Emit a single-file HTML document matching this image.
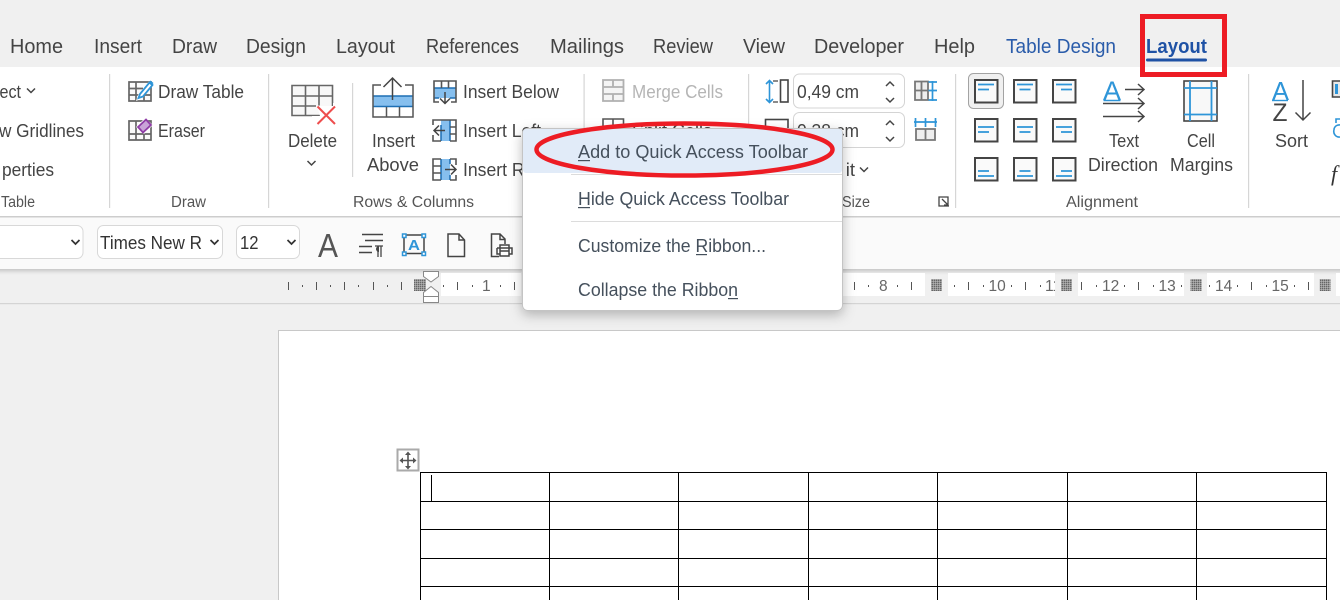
<!DOCTYPE html>
<html><head><meta charset="utf-8"><style>
html,body{margin:0;padding:0;width:1340px;height:600px;overflow:hidden;background:#f0f0f0}
svg{display:block}
text{font-family:"Liberation Sans",sans-serif;fill:#444;white-space:pre}
.tab{font-size:20px}
.r{font-size:18.5px}
.g{font-size:15.5px;fill:#555}
.m{font-size:18.5px;fill:#45505c}
.n{font-size:15.5px;fill:#666}
.i{fill:none;stroke:#555;stroke-width:1.6}
.d{fill:none;stroke:#444;stroke-width:2}
.b{fill:none;stroke:#2e95d8;stroke-width:2}
.l{fill:none;stroke:#444;stroke-width:1.5}
</style></head><body>
<svg width="1340" height="600" viewBox="0 0 1340 600" xmlns="http://www.w3.org/2000/svg">
<defs>
<pattern id="dots" width="2" height="2" patternUnits="userSpaceOnUse"><rect width="2" height="2" fill="#c8c8c8"/><rect width="1.5" height="1.5" fill="#666"/></pattern>
<clipPath id="c11"><rect x="948" y="273" width="107" height="24"/></clipPath>
<filter id="sh" x="-10%" y="-15%" width="120%" height="135%"><feDropShadow dx="0" dy="4" stdDeviation="6" flood-color="#000" flood-opacity=".26"/></filter>
<filter id="sh2" x="-2%" y="-50%" width="104%" height="200%"><feDropShadow dx="0" dy="2" stdDeviation="2" flood-color="#000" flood-opacity=".2"/></filter>
</defs>

<rect width="1340" height="600" fill="#f0f0f0"/>

<!-- ribbon -->
<rect x="-10" y="217" width="1360" height="52" fill="#fafafa" filter="url(#sh2)"/>
<rect x="0" y="67" width="1340" height="149" fill="#fff"/>
<rect x="0" y="216" width="1340" height="1.5" fill="#cdcdcd"/>

<!-- tabs -->
<g class="tabs">
<text class="tab" x="10" y="53" textLength="53" lengthAdjust="spacingAndGlyphs">Home</text>
<text class="tab" x="94" y="53" textLength="48" lengthAdjust="spacingAndGlyphs">Insert</text>
<text class="tab" x="172" y="53" textLength="45" lengthAdjust="spacingAndGlyphs">Draw</text>
<text class="tab" x="246" y="53" textLength="60" lengthAdjust="spacingAndGlyphs">Design</text>
<text class="tab" x="336" y="53" textLength="59" lengthAdjust="spacingAndGlyphs">Layout</text>
<text class="tab" x="426" y="53" textLength="93" lengthAdjust="spacingAndGlyphs">References</text>
<text class="tab" x="550" y="53" textLength="74" lengthAdjust="spacingAndGlyphs">Mailings</text>
<text class="tab" x="653" y="53" textLength="60" lengthAdjust="spacingAndGlyphs">Review</text>
<text class="tab" x="743" y="53" textLength="42" lengthAdjust="spacingAndGlyphs">View</text>
<text class="tab" x="814" y="53" textLength="90" lengthAdjust="spacingAndGlyphs">Developer</text>
<text class="tab" x="934" y="53" textLength="41" lengthAdjust="spacingAndGlyphs">Help</text>
<text class="tab" x="1006" y="53" textLength="110" lengthAdjust="spacingAndGlyphs" style="fill:#2a5caa">Table Design</text>
<text class="tab" x="1146" y="53" textLength="61" lengthAdjust="spacingAndGlyphs" style="fill:#1f52a5;font-weight:bold">Layout</text>
</g>
<rect x="1146" y="58.500" width="61" height="3" rx="1.500" fill="#1f52a5"/>
<rect x="1142.500" y="16.500" width="82" height="58" fill="none" stroke="#ed1c24" stroke-width="5"/>

<!-- separators -->
<g fill="#d6d6d6">
<rect x="109" y="74" width="1.200" height="134"/><rect x="268" y="74" width="1.200" height="134"/>
<rect x="352" y="83" width="1.200" height="94"/><rect x="583.500" y="74" width="1.200" height="134"/>
<rect x="748" y="74" width="1.200" height="134"/><rect x="955" y="74" width="1.200" height="134"/>
<rect x="1248" y="74" width="1.200" height="134"/>
</g>

<!-- left group -->
<text class="r" x="-0.500" y="98" textLength="21.500" lengthAdjust="spacingAndGlyphs">ect</text>
<path class="l" d="M27 88.500l4 4 4-4"/>
<text class="r" x="-1" y="137" textLength="85" lengthAdjust="spacingAndGlyphs">w Gridlines</text>
<text class="r" x="2" y="176" textLength="52" lengthAdjust="spacingAndGlyphs">perties</text>
<text class="g" x="1" y="207" textLength="34" lengthAdjust="spacingAndGlyphs">Table</text>

<!-- draw -->
<path d="M129 82h22v19h-22zM129 88.500h14M129 95h22M136 82v19M144 90v11" fill="#fafafa" stroke="#666" stroke-width="1.700"/>
<path d="M136 101l2-6 11-13.500 4 3.500-11 13.500z" fill="#fff"/>
<path d="M138.500 98l1.500-4 9.500-11.500 3 2.500-9.500 11.500z" fill="#fff" stroke="#2e95d8" stroke-width="1.800"/>
<path d="M148.500 83l2-2.500 3 2.500-2 2.500z" fill="#2e95d8"/>
<text class="r" x="158" y="98" textLength="86" lengthAdjust="spacingAndGlyphs">Draw Table</text>
<path d="M129 121h22v19h-22zM129 134h22M136 121v19M144 127v13" fill="#fafafa" stroke="#666" stroke-width="1.700"/>
<path d="M136 127l9-9 8 7-9 9z" fill="#fff"/>
<path d="M138 127l8-7.500 5 5.500-8 7.500z" fill="#c9a4d8" stroke="#8e3ca5" stroke-width="1.800"/>
<text class="r" x="158" y="137" textLength="47" lengthAdjust="spacingAndGlyphs">Eraser</text>
<text class="g" x="171" y="207" textLength="35" lengthAdjust="spacingAndGlyphs">Draw</text>

<!-- delete -->
<path d="M292 85.500h40.500v30h-40.500zM292 96h40.500M292 106h24M305.500 85.500v30M319 85.500v20" fill="#f8f8f8" stroke="#666" stroke-width="1.600"/>
<path d="M312 116h8l-3-10h16v-3h3v22h-24z" fill="#fff"/>
<path d="M317.500 106.500l17.500 17.500M335 106.500l-17.500 17.500" stroke="#ee4d4d" stroke-width="2" fill="none"/>
<text class="r" x="288" y="147" textLength="49" lengthAdjust="spacingAndGlyphs">Delete</text>
<path class="l" d="M307.500 161l4 4 4-4"/>

<!-- insert above -->
<rect x="373" y="96" width="40" height="11" fill="#86bfee"/>
<path d="M373 96h40M373 106.500h40" stroke="#1d6fb3" stroke-width="1.500"/>
<path d="M373 96v21h40v-21M386.500 107v10M399.500 107v10M373 96v-11h8M405 85h8v11" fill="none" stroke="#555" stroke-width="1.500"/>
<path d="M392.500 100v-22M383.500 87l9-9 9 9" fill="none" stroke="#444" stroke-width="1.500"/>
<text class="r" x="372" y="147" textLength="43" lengthAdjust="spacingAndGlyphs">Insert</text>
<text class="r" x="367" y="171" textLength="52" lengthAdjust="spacingAndGlyphs">Above</text>

<!-- insert below/left/right -->
<rect x="434" y="88" width="22" height="10" fill="#86bfee"/>
<path d="M434 88h22M434 98h5M450 98h6" stroke="#1d6fb3" stroke-width="1.500"/>
<path d="M434 88v-7h22v7M434 88v14h5M456 88v14h-5M441.500 81v7M448.500 81v7" fill="none" stroke="#555" stroke-width="1.600"/>
<path d="M445 92v11M440 98.500l5 5 5-5" fill="none" stroke="#444" stroke-width="1.500"/>
<text class="r" x="463" y="98" textLength="96" lengthAdjust="spacingAndGlyphs">Insert Below</text>

<rect x="441" y="120" width="9" height="21" fill="#86bfee"/>
<path d="M441 125v16M450 120v21" stroke="#1d6fb3" stroke-width="1.500"/>
<path d="M441 120h-8v5M433 135v6h8M441 120h15v21h-6M450 127h6M450 134h6" fill="none" stroke="#555" stroke-width="1.600"/>
<path d="M445 130.500h-11M439 125.500l-5 5 5 5" fill="none" stroke="#444" stroke-width="1.500"/>
<text class="r" x="463" y="137" textLength="78" lengthAdjust="spacingAndGlyphs">Insert Left</text>

<rect x="441" y="159" width="9" height="21" fill="#86bfee"/>
<path d="M441 159v21M450 159v5M450 175v5" stroke="#1d6fb3" stroke-width="1.500"/>
<path d="M441 159h-8v21h8M433 166h8M433 173h8M450 159h6v6M456 175v5h-6" fill="none" stroke="#555" stroke-width="1.600"/>
<path d="M445 169.500h11M451 164.500l5 5-5 5" fill="none" stroke="#444" stroke-width="1.500"/>
<text class="r" x="463" y="176" textLength="90" lengthAdjust="spacingAndGlyphs">Insert Right</text>
<text class="g" x="353" y="207" textLength="121" lengthAdjust="spacingAndGlyphs">Rows &amp; Columns</text>

<!-- merge -->
<path d="M603 80h20.500v21h-20.500zM603 87h20.500M603 94h20.500M613 80v7M613 94v7" fill="#f4f4f4" stroke="#b0b0b0" stroke-width="1.800"/>
<text class="r" x="632" y="98" textLength="91" lengthAdjust="spacingAndGlyphs" style="fill:#b5b5b5">Merge Cells</text>
<path d="M603 119h20.500v21h-20.500zM613 119v21" fill="#fff" stroke="#555" stroke-width="1.600"/>
<text class="r" x="632" y="137" textLength="80" lengthAdjust="spacingAndGlyphs">Split Cells</text>

<!-- cell size -->
<path d="M769.500 81v21M766 84l3.500-3.500 3.500 3.500M766 99l3.500 3.500 3.500-3.500" fill="none" stroke="#2e95d8" stroke-width="1.600"/>
<path d="M773 81h5M773 102h5" stroke="#444" stroke-width="1.300"/>
<rect x="780.500" y="80" width="7.500" height="22" fill="#fff" stroke="#444" stroke-width="1.600"/>
<rect x="793.500" y="74" width="111" height="34" rx="6" fill="#fff" stroke="#d4d4d4"/>
<text class="r" x="797" y="98" textLength="62" lengthAdjust="spacingAndGlyphs">0,49 cm</text>
<path class="l" d="M886 86l4-4 4 4M886 98l4 4 4-4"/>
<rect x="765.500" y="119.500" width="22.500" height="20" fill="#fff" stroke="#444" stroke-width="1.600"/>
<rect x="793.500" y="112.500" width="111" height="35" rx="6" fill="#fff" stroke="#d4d4d4"/>
<text class="r" x="797" y="137" textLength="62" lengthAdjust="spacingAndGlyphs">0,38 cm</text>
<path class="l" d="M886 125l4-4 4 4M886 137l4 4 4-4"/>
<path d="M915 81.500h13v18.500h-13zM915 90.500h13M921.500 81.500v18.500" fill="#eee" stroke="#777" stroke-width="1.800"/>
<path d="M932.500 81v20M928.500 82h8.500M928.500 90.500h8.500M928.500 100h8.500" fill="none" stroke="#2e95d8" stroke-width="1.700"/>
<path d="M915.500 118v9M925.500 118v9M935.500 118v9M914 122h23" fill="none" stroke="#2e95d8" stroke-width="1.700"/>
<path d="M916 129h19v11h-19zM925.500 129v11" fill="#eee" stroke="#777" stroke-width="1.800"/>
<text class="r" x="796.400" y="176">AutoFit</text>
<rect x="830" y="160" width="15.600" height="20" fill="#fff"/>
<path class="l" d="M860 167.500l4 4 4-4"/>
<text class="g" x="842" y="207" textLength="28" lengthAdjust="spacingAndGlyphs">Size</text>
<path d="M949 206h-10v-9h9v9M942 199l6 6M944 205h4v-4" fill="none" stroke="#444" stroke-width="1.300"/>

<!-- alignment -->
<rect x="968.500" y="73.500" width="35" height="35" rx="5" fill="#f0f0f0" stroke="#a3a3a3"/>
<g fill="#fafafa" stroke="#444" stroke-width="2">
<rect x="975" y="80" width="22.500" height="22.500"/><rect x="1014" y="80" width="22.500" height="22.500"/><rect x="1053" y="80" width="22.500" height="22.500"/>
<rect x="975" y="119" width="22.500" height="22.500"/><rect x="1014" y="119" width="22.500" height="22.500"/><rect x="1053" y="119" width="22.500" height="22.500"/>
<rect x="975" y="158" width="22.500" height="22.500"/><rect x="1014" y="158" width="22.500" height="22.500"/><rect x="1053" y="158" width="22.500" height="22.500"/>
</g>
<path stroke="#2e95d8" stroke-width="1.700" fill="none" d="M978 84.500h16M978 89.500h11M1017 84.500h16M1019.500 89.500h11M1056 84.500h16M1061 89.500h11M978 127h16M978 132h11M1017 127h16M1019.500 132h11M1056 127h16M1061 132h11M978 171h11M978 176h16M1019.500 171h11M1017 176h16M1061 171h11M1056 176h16"/>

<text x="1103" y="100" style="font-size:27px;fill:#2e95d8" textLength="18" lengthAdjust="spacingAndGlyphs">A</text>
<path d="M1103.500 100.500h17" stroke="#2e95d8" stroke-width="1.600"/>
<path class="l" d="M1125 89.500h19M1138 84l6 5.500-6 5.500M1103 103.500h41M1138 98l6 5.500-6 5.500M1103 116.500h41M1138 111l6 5.500-6 5.500"/>
<text class="r" x="1109" y="147" textLength="30" lengthAdjust="spacingAndGlyphs">Text</text>
<text class="r" x="1088" y="171" textLength="70" lengthAdjust="spacingAndGlyphs">Direction</text>
<rect x="1184" y="81" width="33" height="40" fill="#f8f8f8" stroke="#444" stroke-width="1.600"/>
<path d="M1184 88h33M1184 114.500h33M1190 81v40M1211.500 81v40" stroke="#2e95d8" stroke-width="1.800" fill="none"/>
<text class="r" x="1187" y="147" textLength="28" lengthAdjust="spacingAndGlyphs">Cell</text>
<text class="r" x="1170" y="171" textLength="63" lengthAdjust="spacingAndGlyphs">Margins</text>
<text class="g" x="1066" y="207" textLength="72" lengthAdjust="spacingAndGlyphs">Alignment</text>

<!-- sort -->
<text x="1272" y="100" style="font-size:26px;fill:#2e95d8" textLength="17" lengthAdjust="spacingAndGlyphs">A</text>
<path d="M1272 100.500h16" stroke="#2e95d8" stroke-width="1.400"/>
<text x="1272.500" y="121" style="font-size:25px;fill:#444" textLength="15" lengthAdjust="spacingAndGlyphs">Z</text>
<path d="M1303 80v40M1295.500 112.500l7.500 7.500 7.500-7.500" fill="none" stroke="#444" stroke-width="1.500"/>
<text class="r" x="1275" y="147" textLength="33" lengthAdjust="spacingAndGlyphs">Sort</text>
<path d="M1340 81h-7.500v16h7.500" fill="#e8e8e8" stroke="#444" stroke-width="1.600"/>
<rect x="1335" y="84" width="3" height="10" fill="#2e95d8"/>
<path d="M1340 119h-4v4M1334 130a5.500 5.500 0 0 0 6 7M1340 125a5 5 0 0 0-6 5" fill="none" stroke="#2e95d8" stroke-width="1.600"/>
<text x="1331" y="181" style="font-size:22px;font-style:italic;font-family:'Liberation Serif',serif;fill:#333">f</text>

<!-- qat -->
<rect x="-10" y="225.500" width="93" height="33" rx="6" fill="#fff" stroke="#d8d8d8"/>
<path d="M71.500 240l4 4 4-4" fill="none" stroke="#333" stroke-width="1.700"/>
<rect x="97.500" y="225.500" width="125" height="33" rx="6" fill="#fff" stroke="#d8d8d8"/>
<text x="100" y="249" textLength="102" lengthAdjust="spacingAndGlyphs" style="font-size:18.500px;fill:#333">Times New R</text>
<path d="M210.500 240l4 4 4-4" fill="none" stroke="#333" stroke-width="1.700"/>
<rect x="236.500" y="225.500" width="63" height="33" rx="6" fill="#fff" stroke="#d8d8d8"/>
<text x="240" y="249" textLength="18.500" lengthAdjust="spacingAndGlyphs" style="font-size:18.500px;fill:#333">12</text>
<path d="M287.500 240l4 4 4-4" fill="none" stroke="#333" stroke-width="1.700"/>
<text x="318" y="257" textLength="20" lengthAdjust="spacingAndGlyphs" style="font-size:33px;fill:#555">A</text>
<path d="M362 234.500h21M365 240.500h18M359 246.500h13M359 252.500h13" stroke="#444" stroke-width="1.500" fill="none"/>
<path d="M375 246h8M381 246v11M378 246v11" stroke="#444" stroke-width="1.300" fill="none"/>
<path d="M376 249a3 3 0 0 1 3-3v6a3 3 0 0 1-3-3z" fill="#444"/>
<rect x="404" y="235" width="20" height="18.500" fill="none" stroke="#444" stroke-width="1.500"/>
<g fill="#fff" stroke="#2e95d8" stroke-width="1.500"><rect x="402.500" y="234" width="3.500" height="3.500"/><rect x="422" y="234" width="3.500" height="3.500"/><rect x="402.500" y="252" width="3.500" height="3.500"/><rect x="422" y="252" width="3.500" height="3.500"/></g>
<text x="408" y="250" style="font-size:14.500px;font-weight:bold;fill:#2e95d8" textLength="12" lengthAdjust="spacingAndGlyphs">A</text>
<path d="M448 234h11l5.500 6v16.500h-16.500zM459 234v6h5.500" fill="none" stroke="#444" stroke-width="1.500"/>
<path d="M499 256.500h-7.500v-22.500h8.500l5 5v5M500 234v5.500h5" fill="none" stroke="#444" stroke-width="1.500"/>
<path d="M500 251v-6h9v6M497 248h15v6h-3M500 254h-3v-6M500 251h9v5h-9z" fill="#fff" stroke="#444" stroke-width="1.500"/>

<!-- ruler -->
<rect x="441" y="273" width="80" height="23" fill="#fff"/>
<rect x="843" y="273" width="82" height="23" fill="#fff"/>
<rect x="948" y="273" width="107" height="23" fill="#fff"/>
<rect x="1078" y="273" width="106" height="23" fill="#fff"/>
<rect x="1207" y="273" width="107" height="23" fill="#fff"/>
<rect x="1336" y="273" width="4" height="23" fill="#fff"/>
<g fill="url(#dots)"><rect x="414" y="279" width="12" height="12"/><rect x="931" y="279" width="11" height="12"/><rect x="1061" y="279" width="11" height="12"/><rect x="1190.500" y="279" width="11" height="12"/><rect x="1319.500" y="279" width="11" height="12"/></g>
<path stroke="#555" stroke-width="1" fill="none" d="
M288.500 282v8M316.500 282v8M344.500 282v8M373.500 282v8M401.500 282v8
M302.500 285v2M330.500 285v2M358.500 285v2M387.500 285v2
M443.500 285v2M457.500 282v8M472.500 285v2M500.500 285v2M514.500 282v8
M854.500 282v8M868.500 285v2M897.500 285v2M911.500 282v8
M954.500 285v2M968.500 282v8M983.500 285v2M1011.500 285v2M1025.500 282v8M1040.500 285v2
M1081.500 282v8M1096.500 285v2M1124.500 285v2M1138.500 282v8M1153.500 285v2M1181.500 285v2
M1209.500 285v2M1237.500 285v2M1251.500 282v8M1266.500 285v2M1294.500 285v2M1308.500 282v8"/>
<text class="n" x="482" y="291">1</text>
<text class="n" x="879" y="291">8</text>
<text class="n" x="988.500" y="291">10</text>
<text class="n" x="1045" y="291" clip-path="url(#c11)">11</text>
<text class="n" x="1102" y="291">12</text>
<text class="n" x="1158.500" y="291">13</text>
<text class="n" x="1215" y="291">14</text>
<text class="n" x="1271.500" y="291">15</text>
<rect x="0" y="303" width="1340" height="1.200" fill="#d4d4d4"/>
<path d="M423.500 271.500h15v5l-7.500 5.500-7.500-5.500z" fill="#fff" stroke="#888"/>
<path d="M431 286.500l7.500 6v10h-15v-10z" fill="#fff" stroke="#888"/>
<path d="M423.500 296.500h15" stroke="#888"/>

<!-- page -->
<rect x="278.500" y="330.500" width="1070" height="280" fill="#fff" stroke="#c8c8c8"/>

<!-- table -->
<path stroke="#000" stroke-width="1" fill="none" d="M420.500 472.500h906M420.500 501.500h906M420.500 529.500h906M420.500 558.500h906M420.500 586.500h906M420.500 472v128M549.500 472v128M678.500 472v128M808.500 472v128M937.500 472v128M1067.500 472v128M1196.500 472v128M1326.500 472v128"/>
<path d="M431.500 475v26" stroke="#000" stroke-width="1"/>
<rect x="397.500" y="449.500" width="21" height="21" fill="#fff" stroke="#aaa" stroke-width="2"/>
<path d="M408 453v15M400.500 460.500h15" stroke="#555" stroke-width="1.600"/>
<path d="M408 451.500l3 3.500h-6zM408 469.500l3-3.500h-6zM399.500 460.500l3.500-3v6zM416.500 460.500l-3.500-3v6z" fill="#555"/>

<!-- context menu -->
<rect x="522.500" y="128.500" width="320" height="182" rx="5" fill="#fff" stroke="#c4c4c4" filter="url(#sh)"/>
<rect x="523" y="129" width="319" height="44" rx="3" fill="#e1ebf8"/>
<rect x="571" y="174" width="271" height="1" fill="#dcdcdc"/>
<rect x="571" y="221" width="271" height="1" fill="#dcdcdc"/>
<text class="m" x="578" y="158" textLength="230" lengthAdjust="spacingAndGlyphs">Add to Quick Access Toolbar</text>
<rect x="578" y="160" width="12" height="1.200" fill="#45505c"/>
<text class="m" x="578" y="205" textLength="211" lengthAdjust="spacingAndGlyphs">Hide Quick Access Toolbar</text>
<rect x="578" y="207" width="12" height="1.200" fill="#45505c"/>
<text class="m" x="578" y="252" textLength="188" lengthAdjust="spacingAndGlyphs">Customize the Ribbon...</text>
<rect x="696" y="254" width="11" height="1.200" fill="#45505c"/>
<text class="m" x="578" y="296" textLength="160" lengthAdjust="spacingAndGlyphs">Collapse the Ribbon</text>
<rect x="728" y="298" width="10" height="1.200" fill="#45505c"/>

<!-- red ellipse -->
<ellipse cx="684.500" cy="149.500" rx="148" ry="26" fill="none" stroke="#ed1c24" stroke-width="4.500"/>
</svg>
</body></html>
